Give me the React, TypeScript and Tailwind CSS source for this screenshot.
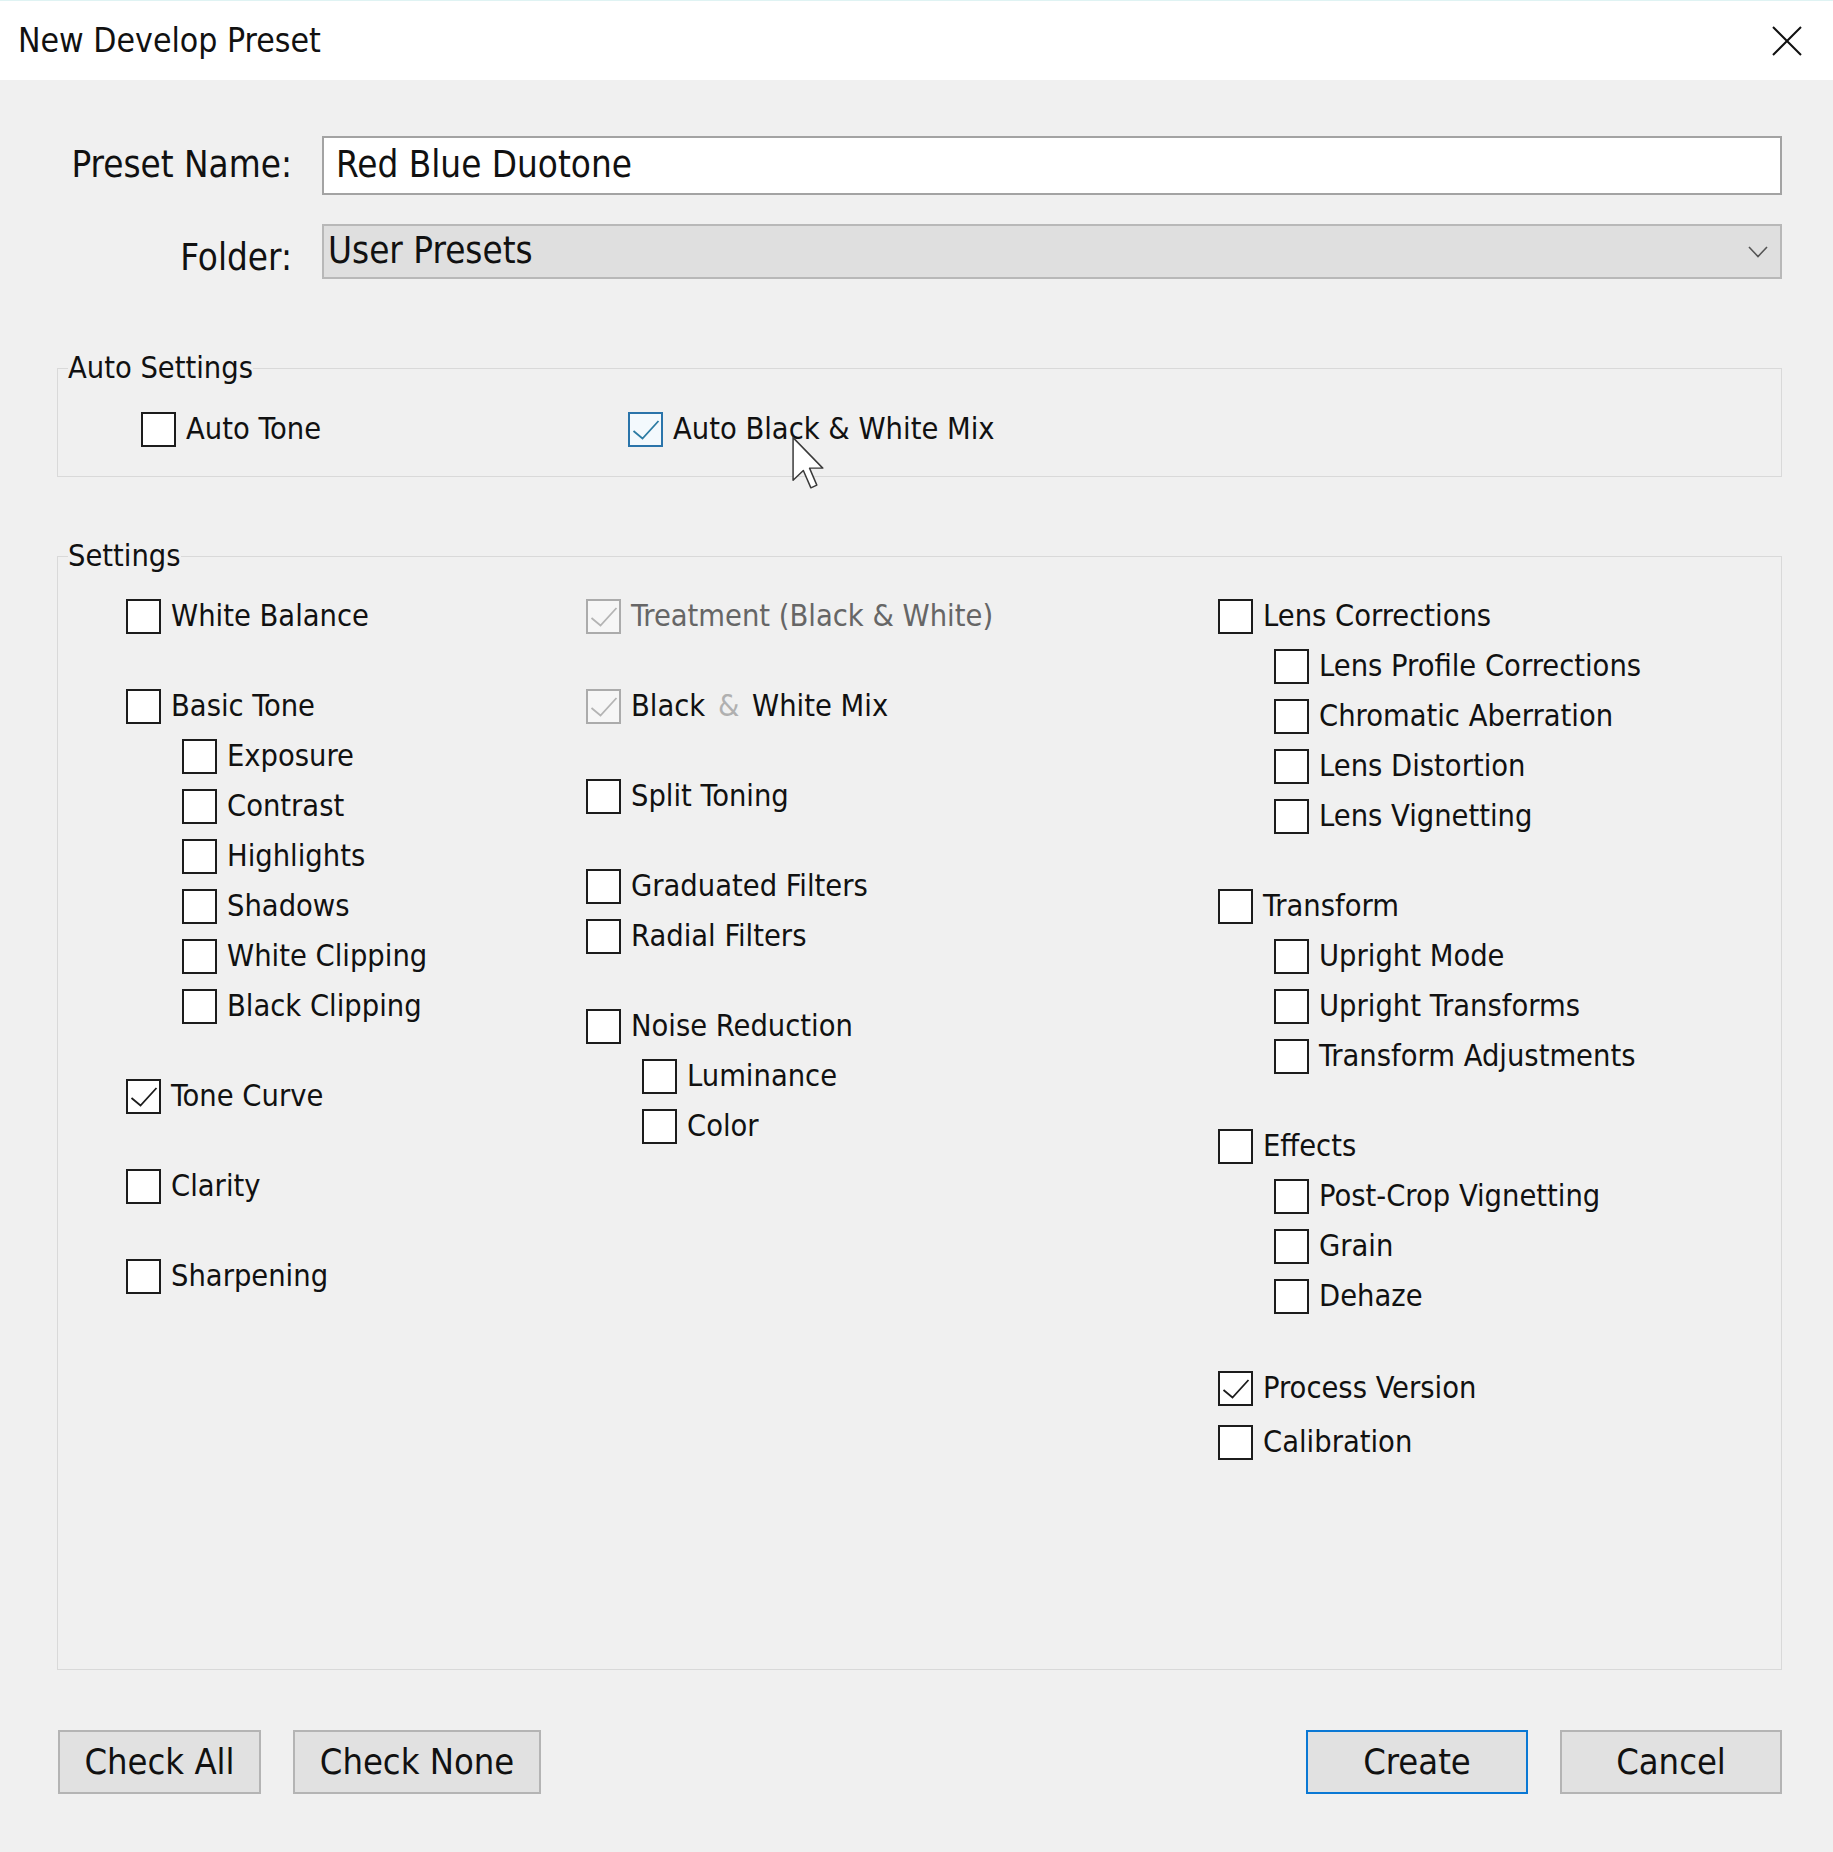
import React from "react";

type BoxState = "off" | "on" | "focus" | "disabled";

interface Item {
  label: React.ReactNode;
  state?: BoxState;
  sub?: boolean;
  muted?: boolean;
}

interface Group {
  items: Item[];
  className?: string;
}

function CheckBox({ state = "off" }: { state?: BoxState }) {
  const stroke =
    state === "focus" ? "#2a74aa" : state === "disabled" ? "#ababab" : "#1c1c1c";
  const fill =
    state === "focus" ? "#f3f9fd" : state === "disabled" ? "#f6f6f6" : "#ffffff";
  const mark =
    state === "focus" ? "#2c7ba3" : state === "disabled" ? "#b4b4b4" : "#1c1c1c";
  const checked = state !== "off";

  return (
    <svg width="35" height="35" viewBox="0 0 35 35" className="shrink-0">
      <rect x="1" y="1" width="33" height="33" fill={fill} stroke={stroke} strokeWidth="2" />
      {checked && (
        <path d="M5.5 19 L14.5 26.5 L30.5 9" fill="none" stroke={mark} strokeWidth="1.8" />
      )}
    </svg>
  );
}

function Row({ item }: { item: Item }) {
  return (
    <div className={`flex items-center gap-[10px] h-[50px] ${item.sub ? "pl-[56px]" : ""}`}>
      <CheckBox state={item.state} />
      <span className={item.muted ? "text-[#666666]" : "text-[#111111]"}>{item.label}</span>
    </div>
  );
}

function Column({ groups, width }: { groups: Group[]; width: string }) {
  return (
    <div className={`flex flex-col gap-[40px] ${width}`}>
      {groups.map((g, i) => (
        <div key={i} className={`flex flex-col ${g.className ?? ""}`}>
          {g.items.map((it, j) => (
            <Row key={j} item={it} />
          ))}
        </div>
      ))}
    </div>
  );
}

const col1: Group[] = [
  { items: [{ label: "White Balance" }] },
  {
    items: [
      { label: "Basic Tone" },
      { label: "Exposure", sub: true },
      { label: "Contrast", sub: true },
      { label: "Highlights", sub: true },
      { label: "Shadows", sub: true },
      { label: "White Clipping", sub: true },
      { label: "Black Clipping", sub: true },
    ],
  },
  { items: [{ label: "Tone Curve", state: "on" }] },
  { items: [{ label: "Clarity" }] },
  { items: [{ label: "Sharpening" }] },
];

const col2: Group[] = [
  { items: [{ label: "Treatment (Black & White)", state: "disabled", muted: true }] },
  {
    items: [
      {
        label: (
          <>
            Black <span className="text-[#b0b0b0] mx-[4px]">&amp;</span> White Mix
          </>
        ),
        state: "disabled",
      },
    ],
  },
  { items: [{ label: "Split Toning" }] },
  { items: [{ label: "Graduated Filters" }, { label: "Radial Filters" }] },
  {
    items: [
      { label: "Noise Reduction" },
      { label: "Luminance", sub: true },
      { label: "Color", sub: true },
    ],
  },
];

const col3: Group[] = [
  {
    items: [
      { label: "Lens Corrections" },
      { label: "Lens Profile Corrections", sub: true },
      { label: "Chromatic Aberration", sub: true },
      { label: "Lens Distortion", sub: true },
      { label: "Lens Vignetting", sub: true },
    ],
  },
  {
    items: [
      { label: "Transform" },
      { label: "Upright Mode", sub: true },
      { label: "Upright Transforms", sub: true },
      { label: "Transform Adjustments", sub: true },
    ],
  },
  {
    items: [
      { label: "Effects" },
      { label: "Post-Crop Vignetting", sub: true },
      { label: "Grain", sub: true },
      { label: "Dehaze", sub: true },
    ],
  },
  {
    items: [{ label: "Process Version", state: "on" }, { label: "Calibration" }],
    className: "gap-[4px] mt-[2px]",
  },
];

function Button({ children, width, primary }: { children: string; width: string; primary?: boolean }) {
  return (
    <button
      className={`${width} h-[64px] bg-[#e1e1e1] text-[36px] text-[#111111] ${
        primary ? "border-2 border-[#0a78d4]" : "border-2 border-[#b4b4b4]"
      }`}
    >
      {children}
    </button>
  );
}

export default function App() {
  return (
    <div className="relative w-[1833px] h-[1852px] bg-[#f0f0f0] flex flex-col font-['DejaVu_Sans_Condensed','DejaVu_Sans',sans-serif] text-[30.5px] text-[#111111] overflow-hidden">
      {/* title bar */}
      <div className="h-[80px] bg-white flex items-center justify-between pl-[18px] pr-[30px] border-t border-[#dff3f3]">
        <span className="text-[33.5px] text-[#111111] mt-[2px]">New Develop Preset</span>
        <svg width="32" height="32" viewBox="0 0 32 32">
          <path d="M2 2 L30 30 M30 2 L2 30" stroke="#111111" strokeWidth="2" fill="none" />
        </svg>
      </div>

      <div className="flex flex-col pl-[57px] pr-[51px]">
        {/* name + folder */}
        <div className="flex items-center h-[59px] mt-[56px] text-[36.5px]">
          <div className="w-[235px] text-right">Preset Name:</div>
          <div className="ml-[30px] flex-1 h-[59px] bg-white border-2 border-[#a3a3a3] flex items-center pl-[12px]">
            Red Blue Duotone
          </div>
        </div>
        <div className="flex items-center h-[55px] mt-[29px] text-[36.5px]">
          <div className="w-[235px] text-right mt-[14px]">Folder:</div>
          <div className="ml-[30px] flex-1 h-[55px] bg-[#dfdfdf] border-2 border-[#b8b8b8] flex items-center justify-between pl-[4px] pr-[12px]">
            <span>User Presets</span>
            <svg width="20" height="12" viewBox="0 0 20 12">
              <path d="M1 1 L10 10.5 L19 1" stroke="#555555" strokeWidth="1.6" fill="none" />
            </svg>
          </div>
        </div>

        {/* auto settings */}
        <fieldset className="mt-[71px] border border-[#d9d9d9]">
          <legend className="ml-[10px] leading-[36px]">Auto Settings</legend>
          <div className="flex pl-[83px] pt-[18px] pb-[22px]">
            <div className="w-[487px]">
              <Row item={{ label: "Auto Tone" }} />
            </div>
            <Row item={{ label: "Auto Black & White Mix", state: "focus" }} />
          </div>
        </fieldset>

        {/* settings */}
        <fieldset className="mt-[61px] border border-[#d9d9d9]">
          <legend className="ml-[10px] leading-[36px]">Settings</legend>
          <div className="flex pl-[68px] pt-[17px] pb-[202px]">
            <Column groups={col1} width="w-[460px]" />
            <Column groups={col2} width="w-[632px]" />
            <Column groups={col3} width="w-[500px]" />
          </div>
        </fieldset>

        {/* buttons */}
        <div className="flex items-center mt-[60px] pl-[1px]">
          <Button width="w-[203px]">Check All</Button>
          <div className="ml-[32px]">
            <Button width="w-[248px]">Check None</Button>
          </div>
          <div className="ml-auto flex gap-[32px]">
            <Button width="w-[222px]" primary>
              Create
            </Button>
            <Button width="w-[222px]">Cancel</Button>
          </div>
        </div>
      </div>

      {/* mouse pointer */}
      <svg
        className="absolute left-[791px] top-[436px]"
        width="36"
        height="54"
        viewBox="0 0 13 20"
      >
        <path
          d="M0.6 0.6 L0.6 16.4 L4.4 12.8 L7.2 19.2 L9.4 18.2 L6.7 11.9 L11.6 11.9 Z"
          fill="#ffffff"
          stroke="#3a3a3a"
          strokeWidth="0.55"
          strokeLinejoin="round"
        />
      </svg>
    </div>
  );
}
